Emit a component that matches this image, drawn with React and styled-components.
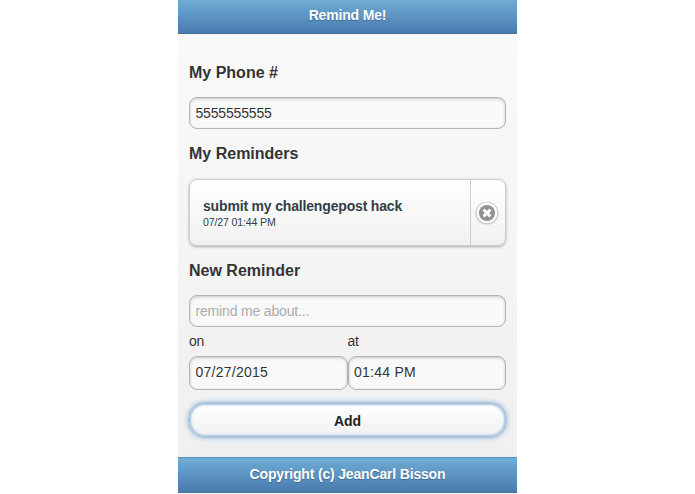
import React from "react";
import styled, { createGlobalStyle } from "styled-components";

const GlobalStyle = createGlobalStyle`
  *, *::before, *::after { box-sizing: border-box; }
  body {
    margin: 0;
    background: #fff;
    font-family: "Liberation Sans", Arial, Helvetica, sans-serif;
    font-size: 14px;
    letter-spacing: -0.17px;
    color: #333;
    overflow: hidden;
  }
`;

const Phone = styled.div`
  width: 339px;
  height: 493px;
  margin: 0 0 0 178px;
  display: flex;
  flex-direction: column;
  background: linear-gradient(#f9f9f9 34px, #f0f0f0 457px);
`;

const Bar = styled.header`
  flex: none;
  height: ${(p) => p.$height}px;
  padding-top: ${(p) => p.$top}px;
  background: linear-gradient(#6facd5, #497bae);
  border-top: ${(p) => (p.$edge ? "1px solid #5d8fb9" : "0")};
  border-bottom: 1px solid #456f9a;
  color: #fff;
  font-weight: bold;
  line-height: 16px;
  text-align: center;
  text-shadow: 0 1px 1px #3e6790;
`;

const Content = styled.main`
  flex: 1;
  padding: 28px 11px 0;
`;

const Heading = styled.h3`
  margin: 0;
  padding-top: ${(p) => p.$shift || 0}px;
  height: ${(p) => p.$height || 35}px;
  font-size: 16px;
  letter-spacing: 0;
  line-height: 20px;
  text-shadow: 0 1px 0 #fff;
`;

const Field = styled.input`
  display: block;
  width: 100%;
  height: ${(p) => p.$height || 32}px;
  margin: 0;
  padding: 0 6px ${(p) => p.$bottom || 1}px 5.5px;
  border: 1px solid #b3b3b3;
  border-radius: 8px;
  outline: none;
  background: #f9f9f9;
  box-shadow: inset 0 1px 3px rgba(0, 0, 0, 0.2);
  color: #333;
  font: inherit;
  letter-spacing: ${(p) => p.$spacing ?? -0.17}px;
  text-shadow: 0 1px 0 #fff;
  &::placeholder { color: #aaa; opacity: 1; }
`;

const Section = styled.section`
  margin-bottom: 15px;
`;

const Card = styled.article`
  display: flex;
  height: 67px;
  border: 1px solid #ccc;
  border-radius: 8px;
  background: linear-gradient(#fff, #f1f1f1);
  box-shadow: 0 1px 3px rgba(0, 0, 0, 0.3);
  overflow: hidden;
`;

const CardBody = styled.div`
  flex: 1;
  padding: 17px 0 0 13px;
  color: #2f3e46;
  text-shadow: 0 1px 0 #fff;
`;

const Title = styled.div`
  font-weight: bold;
  line-height: 18px;
`;

const Time = styled.div`
  font-size: 10.6px;
  letter-spacing: -0.15px;
  line-height: 15px;
`;

const DeleteButton = styled.button`
  width: 35px;
  padding: 0 2px 0 0;
  border: 0;
  border-left: 1px solid #ccc;
  background: none;
  display: flex;
  align-items: center;
  justify-content: center;
`;

const Columns = styled.div`
  display: grid;
  grid-template-columns: 158.5px 158.5px;
`;

const Label = styled.label`
  display: block;
  height: 29px;
  line-height: 29px;
  text-shadow: 0 1px 0 #fff;
`;

const AddButton = styled.button`
  display: block;
  width: 100%;
  height: 34px;
  margin-top: 13px;
  padding: 1px 0 0;
  border: 1px solid #a9c0dc;
  border-radius: 16px;
  background: linear-gradient(#fff, #f1f1f1);
  box-shadow: 0 0 0 1px #adc4de, inset 0 0 2px 1px #a9c2df, 0 0 4px 2px #b4cbe6;
  color: #222;
  font: inherit;
  font-weight: bold;
  text-shadow: 0 1px 0 #fff;
`;

const DeleteIcon = () => (
  <svg width="24" height="24" viewBox="0 0 24 24">
    <circle cx="12" cy="12.3" r="11.8" fill="#000" opacity="0.1" />
    <circle cx="12" cy="12" r="11.1" fill="#bbb" />
    <circle cx="12" cy="11.8" r="10.5" fill="#fff" />
    <circle cx="12" cy="12" r="8.1" fill="#929292" />
    <path d="M8.6 8.6l6.8 6.8M15.4 8.6l-6.8 6.8" stroke="#fff" strokeWidth="2.9" />
  </svg>
);

export default function App() {
  return (
    <>
      <GlobalStyle />
      <Phone>
        <Bar $height={34} $top={7}>Remind Me!</Bar>
        <Content>
          <Section>
            <Heading $shift={1}>My Phone #</Heading>
            <Field defaultValue="5555555555" />
          </Section>
          <Section>
            <Heading>My Reminders</Heading>
            <Card>
              <CardBody>
                <Title>submit my challengepost hack</Title>
                <Time>07/27 01:44 PM</Time>
              </CardBody>
              <DeleteButton aria-label="Delete reminder">
                <DeleteIcon />
              </DeleteButton>
            </Card>
          </Section>
          <Heading $height={34}>New Reminder</Heading>
          <Field placeholder="remind me about..." />
          <Columns>
            <div>
              <Label htmlFor="date">on</Label>
              <Field id="date" $height={34} $bottom={3} $spacing={0.25} defaultValue="07/27/2015" />
            </div>
            <div>
              <Label htmlFor="time">at</Label>
              <Field id="time" $height={34} $bottom={3} $spacing={0.25} defaultValue="01:44 PM" />
            </div>
          </Columns>
          <AddButton>Add</AddButton>
        </Content>
        <Bar as="footer" $height={36} $top={8} $edge>Copyright (c) JeanCarl Bisson</Bar>
      </Phone>
    </>
  );
}
